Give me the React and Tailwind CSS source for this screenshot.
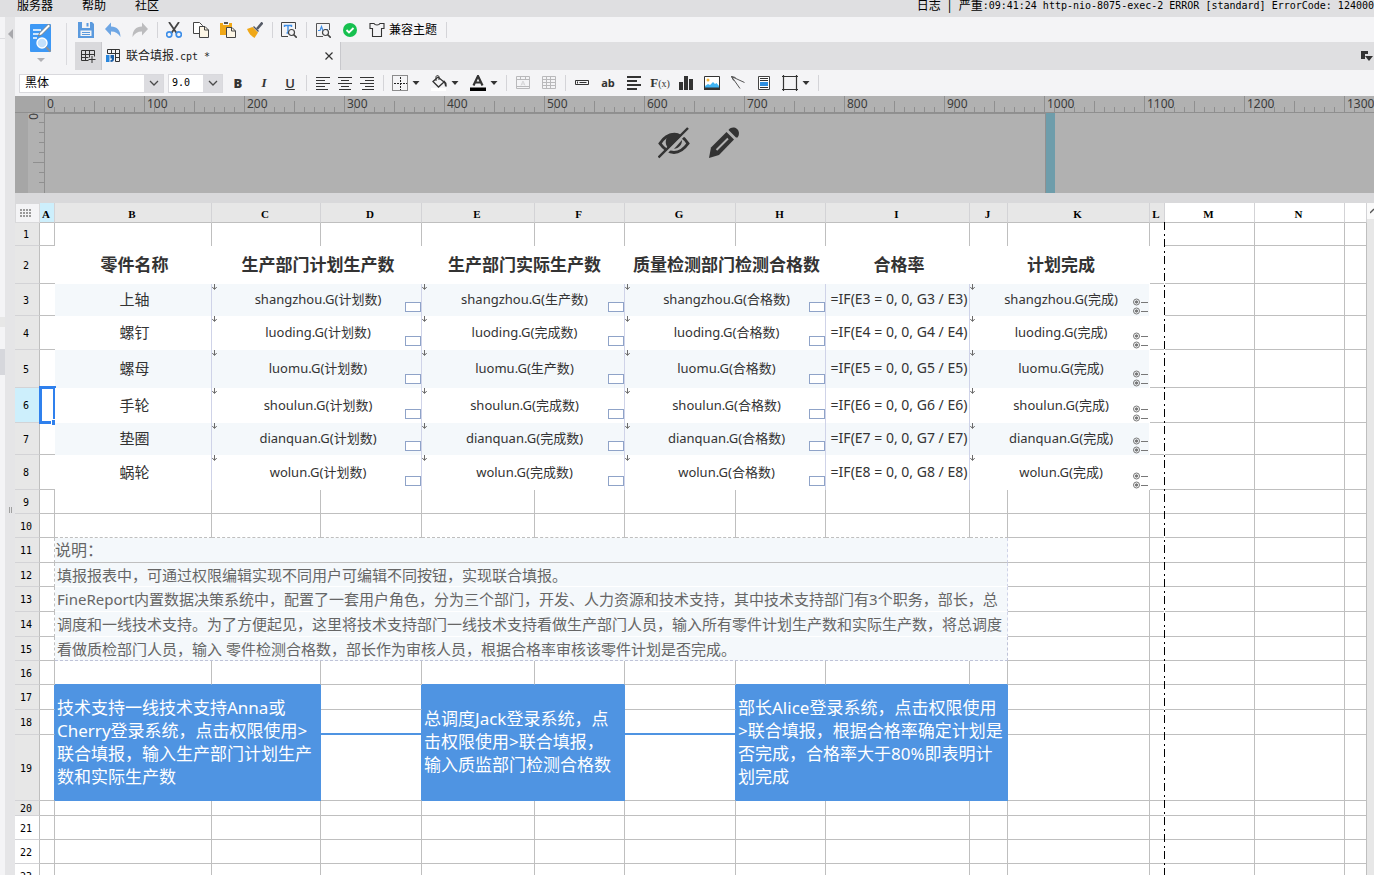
import React, { useState } from 'react';
import clsx from 'clsx';

const COLUMNS = [
    { name: 'A', width: 'w-[15px]', head: 'bg-[#cdeffc]' },
    { name: 'B', width: 'w-[157px]' },
    { name: 'C', width: 'w-[109px]' },
    { name: 'D', width: 'w-[101px]' },
    { name: 'E', width: 'w-[113px]' },
    { name: 'F', width: 'w-[90px]' },
    { name: 'G', width: 'w-[111px]' },
    { name: 'H', width: 'w-[90px]' },
    { name: 'I', width: 'w-[144px]' },
    { name: 'J', width: 'w-[38px]' },
    { name: 'K', width: 'w-[142px]' },
    { name: 'L', width: 'w-[15px]' },
    { name: 'M', width: 'w-[90px]', head: 'bg-white' },
    { name: 'N', width: 'w-[90px]', head: 'bg-white' },
    { name: '', width: 'w-auto', head: 'bg-white' },
];

const PARTS = [
    { row: 3, height: 'h-[32px]', name: '上轴', table: 'shangzhou', actual: '生产数' },
    { row: 4, height: 'h-[34px]', name: '螺钉', table: 'luoding', actual: '完成数' },
    { row: 5, height: 'h-[38px]', name: '螺母', table: 'luomu', actual: '生产数' },
    { row: 6, height: 'h-[35px]', name: '手轮', table: 'shoulun', actual: '完成数' },
    { row: 7, height: 'h-[32px]', name: '垫圈', table: 'dianquan', actual: '完成数' },
    { row: 8, height: 'h-[35px]', name: '蜗轮', table: 'wolun', actual: '完成数' },
];

const NOTES = [
    { row: 12, height: 'h-[24px]', text: '填报报表中，可通过权限编辑实现不同用户可编辑不同按钮，实现联合填报。' },
    { row: 13, height: 'h-[25px]', text: 'FineReport内置数据决策系统中，配置了一套用户角色，分为三个部门，开发、人力资源和技术支持，其中技术支持部门有3个职务，部长，总' },
    { row: 14, height: 'h-[25px]', text: '调度和一线技术支持。为了方便起见，这里将技术支持部门一线技术支持看做生产部门人员，输入所有零件计划生产数和实际生产数，将总调度' },
    { row: 15, height: 'h-[24px]', text: '看做质检部门人员，输入 零件检测合格数，部长作为审核人员，根据合格率审核该零件计划是否完成。', last: true },
];

const RULER = [0, 100, 200, 300, 400, 500, 600, 700, 800, 900, 1000, 1100, 1200, 1300];

/* ---------- small drawings ---------- */

const Svg = ({ children, size = 'w-4 h-4', box = '0 0 16 16' }) => (
    <svg viewBox={box} className={clsx('block shrink-0', size)} fill="none" aria-hidden="true">{children}</svg>
);

const Caret = () => (
    <Svg size="w-2 h-4" box="0 0 8 16"><path d="M0.5 6h7L4 10z" fill="#333" /></Svg>
);

const Chevron = () => (
    <Svg size="w-3 h-3" box="0 0 12 12"><path d="M2 4l4 4 4-4" stroke="#4a4a4a" strokeWidth="1.3" /></Svg>
);

const SaveIcon = () => (
    <Svg>
        <path d="M0 0h14l2 2v14H0z" fill="#5b9ade" />
        <path d="M4 0h8v6H4z" fill="#f4f4f6" />
        <path d="M8.5 1h2v3.5h-2z" fill="#5b9ade" />
        <path d="M2.5 8.5h11V14h-11z" fill="#f4f4f6" />
        <path d="M4 10h8v1H4zM4 12h8v1H4z" fill="#5b9ade" />
    </Svg>
);

const UndoIcon = () => (
    <Svg><path d="M6 0.5v4c6 0 9.5 4 9.5 10.5C13.5 11.5 10.5 9.5 6 9.5v4L0 7z" fill="#6ea6e4" /></Svg>
);

const RedoIcon = () => (
    <Svg><path d="M10 0.5v4c-6 0-9.5 4-9.5 10.5C2.5 11.5 5.5 9.5 10 9.5v4L16 7z" fill="#bcbcbe" /></Svg>
);

const CutIcon = () => (
    <Svg>
        <path d="M3 0l7.5 11M13 0L5.5 11" stroke="#444" strokeWidth="1.8" />
        <circle cx="3.2" cy="12.5" r="2.6" stroke="#3d8ee8" strokeWidth="1.7" />
        <circle cx="12.8" cy="12.5" r="2.6" stroke="#3d8ee8" strokeWidth="1.7" />
    </Svg>
);

const CopyIcon = () => (
    <Svg>
        <path d="M0.5 0.5h6l3 3v8h-9z" fill="#fff" stroke="#444" />
        <path d="M6.5 4.5h5.5l3.5 3.5v7.5h-9z" fill="#fdf6e6" stroke="#444" />
        <path d="M11.5 4.5V8h4" stroke="#444" />
    </Svg>
);

const PasteIcon = () => (
    <Svg>
        <path d="M0 1h12v12H0z" fill="#f0a818" />
        <path d="M3 0h6v3H3z" fill="#f4f4f6" />
        <path d="M4 0h4v2H4z" fill="#555" />
        <path d="M6.5 5.5h5.5l3.5 3.5v6.5h-9z" fill="#fdf6e6" stroke="#444" />
        <path d="M11.5 5.5V9h4" stroke="#444" />
    </Svg>
);

const BrushIcon = () => (
    <Svg>
        <path d="M15.5 0.5L10 7" stroke="#555a66" strokeWidth="2.6" />
        <path d="M6.5 4.5l5 5" stroke="#555a66" strokeWidth="1.4" />
        <path d="M5.5 5l5.5 5.5L7.5 16C4 14 1.5 11 0 7z" fill="#f0a818" />
    </Svg>
);

const FindTextIcon = () => (
    <Svg>
        <path d="M14.5 7V0.5h-14v14H7" stroke="#444" />
        <path d="M3.5 5V3.5h7V5M7 3.5V11M5.5 11h3" stroke="#3d8ee8" strokeWidth="1.4" />
        <circle cx="10.5" cy="10.5" r="3" fill="#f4f4f6" stroke="#444" strokeWidth="1.2" />
        <path d="M12.8 12.8l3 3" stroke="#444" strokeWidth="1.6" />
    </Svg>
);

const WaveIcon = () => (
    <Svg>
        <path d="M14.5 8V1.5H1.5v13H8" stroke="#555" />
        <path d="M3 8.5h2l1.5-4 2 6 1.500-3h3" stroke="#3d8ee8" strokeWidth="1.2" />
        <circle cx="10.5" cy="10.5" r="3" fill="#f4f4f6" stroke="#444" strokeWidth="1.2" />
        <path d="M12.8 12.8l3 3" stroke="#444" strokeWidth="1.6" />
    </Svg>
);

const CheckIcon = () => (
    <Svg>
        <circle cx="8" cy="8" r="7" fill="#16c04f" />
        <path d="M4.5 8l2.5 2.5 4.500-4.500" stroke="#fff" strokeWidth="1.8" />
    </Svg>
);

const ShirtIcon = () => (
    <Svg><path d="M1 1.5h4c1 2 5 2 6 0h4v5h-2.500v8h-9v-8H1z" stroke="#333" strokeWidth="1.1" /></Svg>
);

const GridPlusIcon = () => (
    <Svg>
        <path d="M1.5 2.5h13v6M1.5 2.5v10h7M1.5 6.5h13M1.5 9.5h7M5.5 2.5v10M9.5 2.5v7M8.5 11.5h7M12 8v7" stroke="#333" />
    </Svg>
);

const ReportIcon = () => (
    <Svg>
        <path d="M2.5 1.5h12v12h-4M2.5 1.5v4M2.5 5.5h12M6.5 1.5v4M10.5 1.5v12M10.5 9.5h4" stroke="#333" />
        <path d="M1 7h3.5v7H1z" fill="#2a87dd" />
        <path d="M5.5 7H9v4c0 2-1 3-3.500 3v-2c1 0 1.500-.5 1.500-1.500H5.500z" fill="#1a5fa8" />
    </Svg>
);

const AlignIcon = ({ d }) => <Svg><path d={d} stroke="#333" strokeWidth="1" /></Svg>;

const BorderIcon = () => (
    <Svg>
        <path d="M0.5 0.5h15v15h-15z" stroke="#222" strokeDasharray="1 1" />
        <path d="M8.5 2v13M2 8.5h13" stroke="#222" strokeDasharray="2 1" />
    </Svg>
);

const BucketIcon = () => (
    <Svg>
        <path d="M2 6.5L7 2l6 5-5.500 5z" stroke="#333" strokeWidth="1.3" />
        <path d="M5 6V2c0-2 3-2 3 0v3" stroke="#333" />
        <path d="M12.5 6c2 1.500 2.500 3.500 2.200 5.500" stroke="#333" strokeWidth="1.8" />
        <path d="M0 13h15v3H0z" fill="#fff" />
    </Svg>
);

const FontColorIcon = () => (
    <Svg>
        <path d="M3.500 10.500L8 1l4.500 9.500M5.500 7.500h5" stroke="#333" strokeWidth="2.2" />
        <path d="M0 12.500h16V16H0z" fill="#000" />
    </Svg>
);

const MergeIcon = () => (
    <Svg>
        <path d="M1.5 1.5h13v12h-13zM1.5 4.5h13M5.5 1.5v3M10.5 1.5v3M1.5 11.5h13" stroke="#b9b9bb" />
        <path d="M6 10.500l2-4.500 2 4.500M7 9h2" stroke="#d5d5d7" />
    </Svg>
);

const TableIcon = () => (
    <Svg><path d="M1.5 1.5h13v12h-13zM1.5 4.5h13M1.5 7.5h13M1.5 10.5h13M5.5 1.5v12M9.5 1.5v12" stroke="#b9b9bb" /></Svg>
);

const TextBoxIcon = () => (
    <Svg>
        <path d="M1.5 5.5h13v4h-13z" stroke="#333" />
        <path d="M3.5 6.500v2M5.500 7.500h7" stroke="#333" />
    </Svg>
);

const ParagraphIcon = () => (
    <Svg>
        <path d="M1 2h14M1 6h10M1 10h14M1 14h10" stroke="#333" strokeWidth="2" />
    </Svg>
);

const ChartIcon = () => (
    <Svg><path d="M1 7h4v8H1zM6 1h4v14H6zM11 4h4v11h-4z" fill="#333" /></Svg>
);

const ImageIcon = () => (
    <Svg>
        <path d="M0.5 1.5h15v13h-15z" fill="#fff" stroke="#333" />
        <circle cx="4" cy="5" r="1.5" fill="#f5b73a" />
        <path d="M1 11l3-2 2 1 3-3 2 2 1.500-1L15 11v2H1z" fill="#3fb4f5" />
        <path d="M0 12.500h16V15H0z" fill="#333" />
    </Svg>
);

const SlashIcon = () => (
    <Svg><path d="M1.5 1.5l13 6M1.5 1.5l8.500 12M1.5 1.5l2 4M1.5 1.5l4 1" stroke="#555" /></Svg>
);

const DocIcon = () => (
    <Svg>
        <path d="M2.5 1.5h11v13h-11z" fill="#fff" stroke="#444" />
        <path d="M4 3.5h8M4 5.5h8M4 12.500h8" stroke="#333" />
        <path d="M4 7h8v4H4z" fill="#2f8fe0" />
    </Svg>
);

const FrameIcon = () => (
    <Svg><path d="M1.5 0v16M14.5 0v16M0 1.5h16M0 14.500h16" stroke="#333" strokeWidth="1.200" /></Svg>
);

const BigReportIcon = () => (
    <Svg size="w-[22px] h-[30px]" box="0 0 22 30">
        <rect x="0" y="1" width="21" height="28" rx="1" fill="#3d98f5" />
        <path d="M3 7h8M3 11h6M3 15h4" stroke="#fff" strokeWidth="1.6" />
        <path d="M20.5 3l-9 9-3 1 1-3 9-9z" fill="#fff" stroke="#777" strokeWidth="0.9" />
        <circle cx="12" cy="20" r="5" fill="#c3e0fb" stroke="#fff" strokeWidth="1.400" />
        <path d="M16 24l4.500 4.500" stroke="#8a8f96" strokeWidth="2" />
    </Svg>
);

const HiddenIcon = () => (
    <Svg size="w-8 h-8" box="0 0 32 32">
        <path d="M2 16.500C7 8.500 13 7.500 16 7.500s9 1 14 9c-5 7-11 9-14 9s-9-2-14-9z" stroke="#333" strokeWidth="3" />
        <path d="M8 13a8 8 0 0 1 15-3L11 22c-2-2-4-5-3-9z" fill="#333" />
        <path d="M24 13c0 5-3 8-8 9z" fill="#333" />
        <path d="M2 32L31 3" stroke="#b1b1b1" strokeWidth="2.500" />
        <path d="M0.500 30.500L30 1" stroke="#333" strokeWidth="2.400" />
    </Svg>
);

const PencilIcon = () => (
    <Svg size="w-8 h-8" box="0 0 32 32">
        <path d="M1 31l2-10.500L18.500 5l7.500 7.500L11 28z" fill="#333" />
        <path d="M8.500 23L20 11.500" stroke="#b1b1b1" strokeWidth="2" />
        <path d="M20.500 3c2.500-3 6-3 8.500-1s2.500 6 .5 8.500h-1.500z" fill="#333" />
    </Svg>
);

const DownArrow = () => (
    <svg viewBox="0 0 5 6" className="absolute left-0 top-0 w-[5px] h-[6px]" aria-hidden="true">
        <path d="M2.5 0v5M0.3 3l2.2 2.500L4.700 3" stroke="#6b6b6b" fill="none" />
    </svg>
);

const RadioMarks = () => (
    <svg viewBox="0 0 16 17" className="absolute right-0 bottom-px w-4 h-[17px]" fill="none" aria-hidden="true">
        {[4, 13].map(y => (
            <g key={y} stroke="#777">
                <circle cx="3.5" cy={y} r="3" />
                <circle cx="3.5" cy={y} r="1.2" fill="#777" />
                <path d={`M8 ${y + 0.5}h7`} />
            </g>
        ))}
    </svg>
);

const InputMark = () => (
    <span className="absolute right-0 bottom-1 w-4 h-[10px] border border-[#8fa3c8] bg-white"></span>
);

/* ---------- toolbars ---------- */

const Tool = ({ label, children, wide }) => (
    <button type="button" aria-label={label} className={clsx('h-4 flex items-center justify-center shrink-0', wide ? 'gap-1' : 'w-4')}>
        {children}
    </button>
);

const Divider = ({ className }) => <div className={clsx('w-px h-4 bg-[#d4d4d8] shrink-0', className)}></div>;

const MenuBar = () => (
    <div className="h-[17px] shrink-0 bg-[#dfdfe1] flex justify-between overflow-hidden text-[12px] leading-[11px] text-black whitespace-nowrap">
        <nav className="flex gap-[29px] pl-[17px]">
            <a href="#server">服务器</a>
            <a href="#help">帮助</a>
            <a href="#community">社区</a>
        </nav>
        <div className="flex">
            <a href="#log">日志</a>
            <span className="w-[18px] text-center">|</span>
            <span>严重</span>
            <span className="font-['DejaVu_Sans_Mono','Noto_Sans_CJK_SC',monospace] text-[10px]">:09:41:24 http-nio-8075-exec-2 ERROR [standard] ErrorCode: 124000</span>
        </div>
    </div>
);

const MainToolbar = () => (
    <div className="h-[25px] flex items-center pl-[3px]">
        <div className="flex gap-[11px]">
            <Tool label="保存"><SaveIcon /></Tool>
            <Tool label="撤销"><UndoIcon /></Tool>
            <Tool label="重做"><RedoIcon /></Tool>
        </div>
        <Divider className="ml-[9px] mr-2" />
        <div className="flex gap-[11px]">
            <Tool label="剪切"><CutIcon /></Tool>
            <Tool label="复制"><CopyIcon /></Tool>
            <Tool label="粘贴"><PasteIcon /></Tool>
            <Tool label="格式刷"><BrushIcon /></Tool>
        </div>
        <Divider className="ml-[9px] mr-2" />
        <Tool label="查找"><FindTextIcon /></Tool>
        <Divider className="ml-[9px] mr-2" />
        <div className="flex gap-[11px]">
            <Tool label="检测"><WaveIcon /></Tool>
            <Tool label="校验"><CheckIcon /></Tool>
            <Tool label="兼容主题" wide>
                <ShirtIcon />
                <span className="text-[12px] leading-4 text-black">兼容主题</span>
            </Tool>
        </div>
        <Divider className="ml-[9px] mr-2" />
    </div>
);

const TabBar = () => (
    <div className="h-[28px] bg-[#dfdfe1] flex items-stretch">
        <button type="button" aria-label="新建" className="w-[26px] bg-[#d9d9dc] flex items-center justify-center"><GridPlusIcon /></button>
        <div className="w-[240px] border-x border-[#c8c8cc] bg-[#f4f4f6] flex items-center gap-[5px] pl-[3px] pr-[6px]">
            <ReportIcon />
            <span className="flex-1 text-[12px] leading-4 text-[#222]">
                联合填报<span className="font-['DejaVu_Sans_Mono',monospace] text-[10px]">.cpt *</span>
            </span>
            <button type="button" aria-label="关闭">
                <Svg size="w-[10px] h-[10px]" box="0 0 10 10"><path d="M1.500 1.500l7 7M8.500 1.500l-7 7" stroke="#333" strokeWidth="1.200" /></Svg>
            </button>
        </div>
        <div className="flex-1 flex items-center justify-end">
            <Svg size="w-[14px] h-[12px]" box="0 0 14 12">
                <path d="M1 1h7v3H5v5H1z" fill="#333" />
                <path d="M5 6h8L9 11z" fill="#333" />
            </Svg>
        </div>
    </div>
);

const Picker = ({ label, value, onChange, options, width, mono }) => (
    <label className={clsx('relative flex h-[19px] shrink-0 border border-[#d9d9dd] bg-white', width)}>
        <span className="sr-only">{label}</span>
        <select
            value={value}
            onChange={e => onChange(e.target.value)}
            className={clsx('w-full appearance-none bg-transparent outline-none leading-4 text-black',
                mono ? "pl-[3px] text-[10px] font-['DejaVu_Sans_Mono',monospace]" : 'pl-[5px] text-[12px]')}
        >
            {options.map(o => <option key={o}>{o}</option>)}
        </select>
        <span className="pointer-events-none absolute inset-y-0 right-0 w-[19px] bg-[#dcdce0] flex items-center justify-center"><Chevron /></span>
    </label>
);

const FormatBar = () => {
    const [font, setFont] = useState('黑体');
    const [size, setSize] = useState('9.0');

    return (
        <div className="h-[26px] shrink-0 bg-[#f4f4f6] flex items-center pl-1">
            <Picker label="字体" value={font} onChange={setFont} options={['黑体', '宋体']} width="w-[145px]" />
            <div className="w-1 shrink-0"></div>
            <Picker label="字号" value={size} onChange={setSize} options={['9.0', '10.0']} width="w-[55px]" mono />
            <div className="flex gap-[10px] ml-[7px] text-[#333] font-['Open_Sans',sans-serif] text-[13px] leading-4">
                <Tool label="加粗"><b className="font-extrabold">B</b></Tool>
                <Tool label="斜体"><i className="font-['Liberation_Serif',serif] font-bold">I</i></Tool>
                <Tool label="下划线"><u className="font-semibold">U</u></Tool>
            </div>
            <Divider className="mx-2" />
            <div className="flex gap-[6px]">
                <Tool label="左对齐"><AlignIcon d="M1 2.5h14M1 5.5h9M1 8.5h14M1 11.5h9M1 14.5h12" /></Tool>
                <Tool label="居中"><AlignIcon d="M1 2.5h14M4 5.5h8M1 8.5h14M4 11.5h8M2 14.5h12" /></Tool>
                <Tool label="右对齐"><AlignIcon d="M1 2.5h14M6 5.5h9M1 8.5h14M6 11.5h9M3 14.5h12" /></Tool>
            </div>
            <Divider className="mx-2" />
            <div className="flex gap-[11px]">
                <Tool label="边框" wide><BorderIcon /><Caret /></Tool>
                <Tool label="背景" wide><BucketIcon /><Caret /></Tool>
                <Tool label="文字颜色" wide><FontColorIcon /><Caret /></Tool>
            </div>
            <Divider className="mx-2" />
            <div className="flex gap-[10px]">
                <Tool label="合并单元格"><MergeIcon /></Tool>
                <Tool label="拆分单元格"><TableIcon /></Tool>
            </div>
            <Divider className="mx-2" />
            <div className="flex gap-[10px] text-[#333]">
                <Tool label="控件"><TextBoxIcon /></Tool>
                <Tool label="文本"><span className="font-['Open_Sans',sans-serif] font-bold text-[11px] leading-4">ab</span></Tool>
                <Tool label="富文本"><ParagraphIcon /></Tool>
                <Tool label="公式">
                    <span className="font-['Liberation_Serif',serif] text-[13px] leading-4"><b>F</b><span className="text-[10px]">(x)</span></span>
                </Tool>
                <Tool label="图表"><ChartIcon /></Tool>
                <Tool label="图片"><ImageIcon /></Tool>
                <Tool label="斜线"><SlashIcon /></Tool>
                <Tool label="子报表"><DocIcon /></Tool>
                <Tool label="悬浮元素" wide><FrameIcon /><Caret /></Tool>
            </div>
            <Divider className="mx-2" />
        </div>
    );
};

/* ---------- ruler and parameter pane ---------- */

const RulerUnit = ({ value }) => (
    <div className="relative w-[100px] shrink-0 flex items-end">
        {[0, 1, 2, 3, 4, 5, 6, 7, 8, 9].map(i => (
            <div key={i} className={clsx('w-[10px] border-l border-[#8f8f8f]', i === 0 ? 'h-full' : i === 5 ? 'h-[11px]' : 'h-[5px]')}></div>
        ))}
        <span className="absolute left-[3px] top-0 text-[12px] leading-4 text-[#3c3c3c] font-['Noto_Sans',sans-serif]">{value}</span>
    </div>
);

const ParameterPane = () => (
    <div className="shrink-0 bg-[#b1b1b1]">
        <div className="flex h-[17px] overflow-hidden border-b border-[#8f8f8f]">
            <div className="w-[29px] shrink-0 bg-[#a6a6a6]"></div>
            {RULER.map(v => <RulerUnit key={v} value={v} />)}
        </div>
        <div className="flex h-[80px]">
            <div className="w-[13px] shrink-0 bg-[#a6a6a6]"></div>
            <div className="w-[17px] shrink-0 flex flex-col items-end relative border-r border-[#8f8f8f] overflow-hidden">
                {[1, 2, 3, 4, 5, 6, 7, 8].map(i => (
                    <div key={i} className={clsx('h-[10px] border-b border-[#8f8f8f]', i === 5 ? 'w-[11px]' : i === 8 ? 'w-0' : 'w-[5px]')}></div>
                ))}
                <span className="absolute left-0 top-0 text-[12px] leading-[11px] text-[#3c3c3c] font-['Noto_Sans',sans-serif] [writing-mode:vertical-rl]">0</span>
            </div>
            <div className="relative flex-1 flex">
                <div className="w-[1001px] border-t border-r border-[#909090]"></div>
                <div className="w-[9px] bg-[#6e9dab]"></div>
                <div className="absolute inset-0 flex justify-center gap-[18px] pt-[14px] pr-[22px]">
                    <HiddenIcon />
                    <PencilIcon />
                </div>
            </div>
        </div>
        <div className="h-[10px] bg-[#d9d9db]"></div>
    </div>
);

/* ---------- sheet ---------- */

const Cell = ({ edges = 'border-r border-b border-[#bfbfbf]', className, children, ...rest }) => (
    <td className={clsx('p-0', edges, className)} {...rest}>{children}</td>
);

const Cells = ({ count, edges }) => Array.from({ length: count }, (_, i) => <Cell key={i} edges={edges} />);

const RowHead = ({ n, active }) => (
    <th scope="row" className={clsx(
        "p-0 pt-[2px] pr-[2px] border-r border-b border-r-[#bfbfbf] border-b-[#d3d3d6] text-[10px] leading-3 font-normal text-black font-['DejaVu_Sans_Mono',monospace]",
        active ? 'bg-[#cdeffc]' : n > 20 ? 'bg-white' : 'bg-[#e7e7e7]')}
    >
        {n}
    </th>
);

const RIGHT_ONLY = 'border-r border-[#bfbfbf]';
const BOTTOM_ONLY = 'border-b border-[#bfbfbf]';
const BLUE_RIGHT = 'border-r border-b border-[#bfbfbf] border-r-[#4f94e2]';
const BLUE_BOTTOM = 'border-r border-b border-[#bfbfbf] border-b-[#4f94e2]';

const PartRow = ({ part, index }) => {
    const { row, table } = part;
    const selected = row === 6;
    const stripe = index % 2 === 0 ? 'bg-[#f4f8fb]' : 'bg-white';
    const edge = 'border-r border-[#cfd3e8]';
    const box = 'relative pl-[3px] pb-[2px] text-center leading-5 text-[#333]';
    const text = clsx(box, 'text-[13px]', stripe);

    return (
        <tr className={part.height}>
            <RowHead n={row} active={selected} />
            <Cell edges={BOTTOM_ONLY} className="relative">
                {selected && (
                    <span className="absolute -left-px -top-[2px] -right-px -bottom-[2px] border-[3px] border-[#2f80ed]">
                        <span className="absolute -right-1 -bottom-1 w-[6px] h-[6px] border-t border-l border-white bg-[#2f80ed]"></span>
                    </span>
                )}
            </Cell>
            <Cell edges={edge} className={clsx(box, 'text-[15px]', stripe)}>{part.name}</Cell>
            <Cell edges={edge} colSpan={2} className={text}><DownArrow />{table}.G(计划数)<InputMark /></Cell>
            <Cell edges={edge} colSpan={2} className={text}><DownArrow />{table}.G({part.actual})<InputMark /></Cell>
            <Cell edges={edge} colSpan={2} className={text}><DownArrow />{table}.G(合格数)<InputMark /></Cell>
            <Cell edges={edge} className={clsx(box, 'text-[14px] whitespace-nowrap', stripe)}>{`=IF(E${row} = 0, 0, G${row} / E${row})`}</Cell>
            <Cell edges="border-r border-white" colSpan={2} className={text}><DownArrow />{table}.G(完成)<RadioMarks /></Cell>
            <Cell edges={row === 3 ? '' : BOTTOM_ONLY} />
            <Cells count={3} />
        </tr>
    );
};

const PlainRow = ({ n, height }) => (
    <tr className={height}>
        <RowHead n={n} />
        <Cells count={15} />
    </tr>
);

const StepBox = ({ colSpan, lines }) => (
    <Cell
        rowSpan={3}
        colSpan={colSpan}
        edges="border-r border-b border-[#4f94e2]"
        className="bg-[#4f94e2] pl-[2px] pb-[2px] text-[17px] leading-[23px] text-white whitespace-nowrap"
    >
        {lines.map(line => <div key={line}>{line}</div>)}
    </Cell>
);

const Sheet = () => (
    <div className="relative flex-1 min-w-0 overflow-hidden">
        <table className="w-full table-fixed border-separate border-spacing-0 bg-white">
            <colgroup>
                <col className="w-[25px]" />
                {COLUMNS.map((c, i) => <col key={i} className={c.width} />)}
            </colgroup>
            <thead>
                <tr className="h-[20px]">
                    <th className="p-0 bg-[#f4f4f6] border-r border-b border-t border-l border-[#d9d9db]">
                        <Svg size="w-[11px] h-2 ml-1" box="0 0 11 8">
                            <path d="M0 1h11M0 4h11M0 7h11" stroke="#999" strokeWidth="2" strokeDasharray="2 1" />
                        </Svg>
                    </th>
                    {COLUMNS.map((c, i) => (
                        <th key={i} scope="col" className={clsx(
                            "p-0 pt-[2px] pr-[2px] border-r border-b border-r-[#d3d3d6] border-b-[#bfbfbf] text-[11px] leading-3 font-bold text-black font-['Liberation_Serif',serif]",
                            c.head || 'bg-[#e7e7e7]')}
                        >
                            {c.name}
                        </th>
                    ))}
                </tr>
            </thead>
            <tbody>
                <tr className="h-[23px]">
                    <RowHead n={1} />
                    <Cell />
                    <Cells count={10} edges={RIGHT_ONLY} />
                    <Cell edges="" />
                    <Cells count={3} />
                </tr>
                <tr className="h-[38px] text-[17px] leading-6 font-bold text-center text-[#333]">
                    <RowHead n={2} />
                    <Cell edges={BOTTOM_ONLY} />
                    <Cell edges="" className="pl-[2px]">零件名称</Cell>
                    <Cell edges="" className="pl-[2px]" colSpan={2}>生产部门计划生产数</Cell>
                    <Cell edges="" className="pl-[2px]" colSpan={2}>生产部门实际生产数</Cell>
                    <Cell edges="" className="pl-[2px]" colSpan={2}>质量检测部门检测合格数</Cell>
                    <Cell edges="" className="pl-[2px]">合格率</Cell>
                    <Cell edges="" className="pl-[2px]" colSpan={2}>计划完成</Cell>
                    <Cell edges={BOTTOM_ONLY} />
                    <Cells count={3} />
                </tr>
                {PARTS.map((part, i) => <PartRow key={part.row} part={part} index={i} />)}
                <PlainRow n={9} height="h-[24px]" />
                <tr className="h-[24px]">
                    <RowHead n={10} />
                    <Cell />
                    <Cells count={9} edges="border-r border-b border-[#bfbfbf] [border-bottom-style:dashed]" />
                    <Cells count={5} />
                </tr>
                <tr className="h-[25px]">
                    <RowHead n={11} />
                    <Cell edges="border-r border-b border-[#bfbfbf] [border-right-style:dashed]" />
                    <Cell
                        colSpan={9}
                        edges="border-r border-b border-[#bfbfbf] border-r-[#cfd3e8] [border-right-style:dashed]"
                        className="bg-[#f4f8fb] text-[16px] leading-5 text-[#666]"
                    >
                        说明：
                    </Cell>
                    <Cells count={5} />
                </tr>
                {NOTES.map(note => (
                    <tr key={note.row} className={note.height}>
                        <RowHead n={note.row} />
                        <Cell edges="border-r border-b border-[#bfbfbf] [border-right-style:dashed]" />
                        <Cell
                            colSpan={9}
                            edges={note.last
                                ? 'border-r border-b border-dashed border-[#bfc3d8]'
                                : 'border-r border-b border-r-[#cfd3e8] border-b-white [border-right-style:dashed]'}
                            className="bg-[#f4f8fb] pl-[2px] text-[15px] leading-5 text-[#666] whitespace-nowrap"
                        >
                            {note.text}
                        </Cell>
                        <Cells count={5} />
                    </tr>
                ))}
                <tr className="h-[24px]">
                    <RowHead n={16} />
                    <Cell />
                    <Cells count={2} edges={BLUE_BOTTOM} />
                    <Cell />
                    <Cells count={2} edges={BLUE_BOTTOM} />
                    <Cell />
                    <Cells count={3} edges={BLUE_BOTTOM} />
                    <Cells count={5} />
                </tr>
                <tr className="h-[25px]">
                    <RowHead n={17} />
                    <Cell edges={BLUE_RIGHT} />
                    <StepBox colSpan={2} lines={['技术支持一线技术支持Anna或', 'Cherry登录系统，点击权限使用>', '联合填报，输入生产部门计划生产', '数和实际生产数']} />
                    <Cell edges={BLUE_RIGHT} />
                    <StepBox colSpan={2} lines={['总调度Jack登录系统，点', '击权限使用>联合填报，', '输入质监部门检测合格数']} />
                    <Cell edges={BLUE_RIGHT} />
                    <StepBox colSpan={3} lines={['部长Alice登录系统，点击权限使用', '>联合填报，根据合格率确定计划是', '否完成，合格率大于80%即表明计', '划完成']} />
                    <Cells count={5} />
                </tr>
                <tr className="h-[25px]">
                    <RowHead n={18} />
                    <Cell edges={BLUE_RIGHT} />
                    <Cells count={2} edges="border-r border-b-2 border-[#4f94e2]" />
                    <Cells count={5} />
                </tr>
                <tr className="h-[66px]">
                    <RowHead n={19} />
                    <Cells count={3} edges={BLUE_RIGHT} />
                    <Cells count={5} />
                </tr>
                <PlainRow n={20} height="h-[15px]" />
                <PlainRow n={21} height="h-[24px]" />
                <PlainRow n={22} height="h-[24px]" />
                <PlainRow n={23} height="h-[24px]" />
            </tbody>
        </table>
        {/* page break guide after column L */}
        <div className="absolute left-[1149px] top-[19px] bottom-0 w-px bg-[repeating-linear-gradient(to_bottom,#000_0_8px,#fff_8px_12px,#000_12px_14px,#fff_14px_17px)]"></div>
    </div>
);

const App = () => (
    <div className="h-screen flex flex-col overflow-hidden bg-[#f4f4f6] font-['Noto_Sans','Noto_Sans_CJK_SC',sans-serif]">
        <MenuBar />
        <div className="flex-1 min-h-0 flex">
            <div className="w-[5px] shrink-0 flex flex-col">
                <div className="h-[22px] border-b border-[#dcdce0]"></div>
                <div className="h-[278px]"></div>
                <div className="h-[10px] bg-[#e7e7e7]"></div>
                <div className="h-[22px]"></div>
                <div className="h-[26px] bg-[#d6d7dc]"></div>
            </div>
            <div className="w-[10px] shrink-0 bg-[#e5e5e7] flex flex-col items-center">
                <Svg size="w-[6px] h-[10px] mt-3" box="0 0 6 10"><path d="M6 0v10L1 5z" fill="#a8a8ac" /></Svg>
                <div className="mt-[468px] w-[3px] h-[6px] border-x border-[#a0a0a0]"></div>
            </div>
            <main className="flex-1 min-w-0 flex flex-col">
                <div className="flex shrink-0">
                    <div className="w-[60px] shrink-0 flex">
                        <button type="button" aria-label="预览" className="w-[51px] flex flex-col items-center pt-[6px] gap-[5px]">
                            <BigReportIcon />
                            <Svg size="w-2 h-1" box="0 0 8 4"><path d="M0 0h8L4 4z" fill="#b0b0b4" /></Svg>
                        </button>
                        <div className="w-px h-[42px] mt-[6px] bg-[#dadade]"></div>
                    </div>
                    <div className="flex-1 min-w-0">
                        <MainToolbar />
                        <TabBar />
                    </div>
                </div>
                <FormatBar />
                <ParameterPane />
                <div className="flex-1 min-h-0 flex">
                    <Sheet />
                    <div className="w-[7px] shrink-0 bg-[#e7e7e7]">
                        <div className="h-4 bg-[#fafafa] flex justify-end items-center">
                            <Svg size="w-1 h-2" box="0 0 4 8"><path d="M0 6l4-4" stroke="#555" strokeWidth="1.300" /></Svg>
                        </div>
                    </div>
                </div>
            </main>
        </div>
    </div>
);

export default App;
